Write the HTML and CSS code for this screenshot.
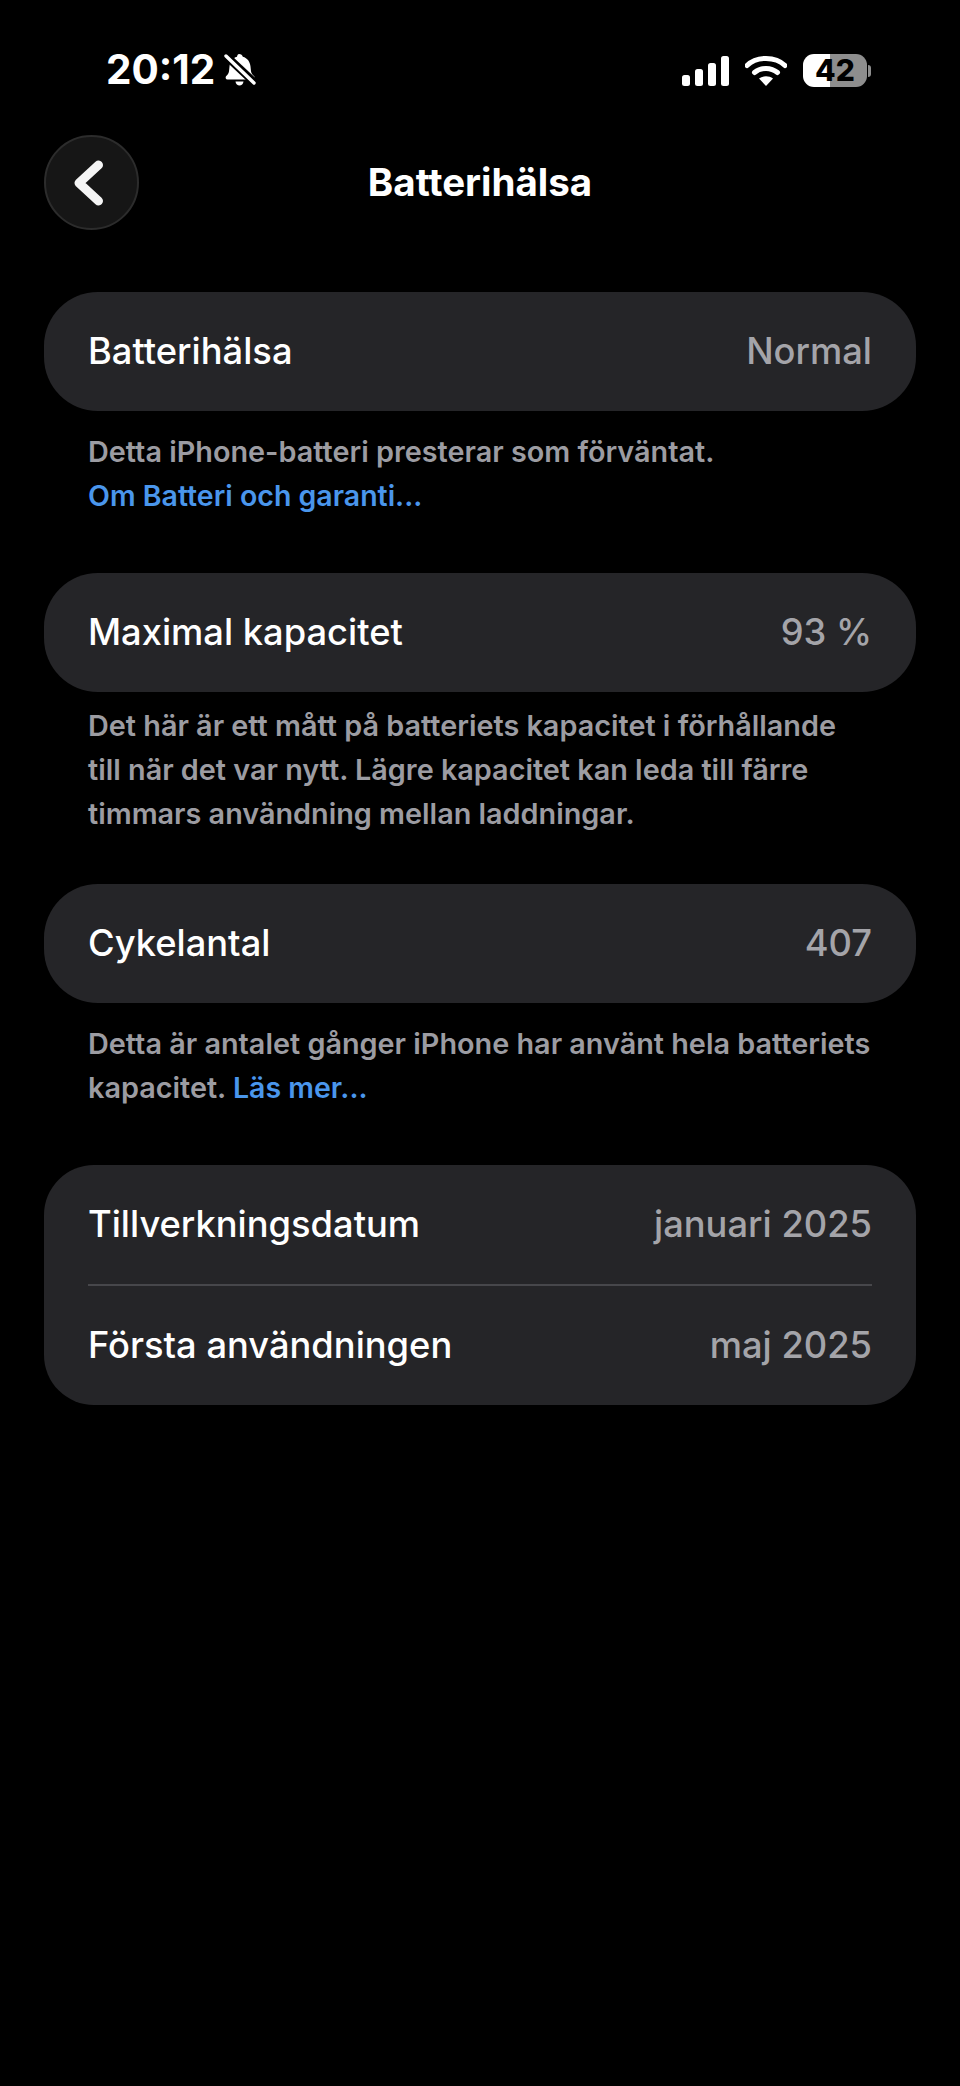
FILE: index.html
```html
<!DOCTYPE html>
<html lang="sv">
<head>
  <meta charset="UTF-8">
  <title>Batterihälsa</title>
  <link rel="stylesheet" href="styles.css">
</head>
<body>

  <div class="statusbar">
    <div class="status-left">
      <span class="clock">20:12</span>
      <svg class="bell" width="34" height="36" viewBox="0 0 34 36">
        <path d="M16 2c2 0 3.500 1.200 3.800 2.800 4.700 1.300 7.200 5 7.700 9.700l.5 4.700c.2 1.800 1.300 3.300 3 4.800 1.200 1.300.5 3.500-1.300 3.500H4.500c-1.800 0-2.500-2.200-1.300-3.500 1.700-1.500 2.600-3 2.800-4.800l.5-4.700c.5-4.700 2.800-8.400 7.500-9.700C14.200 3.200 15 2 16 2z" fill="#fff"/>
        <path d="M12.500 29.500h8c-.3 2.500-2 4-4 4s-3.700-1.500-4-4z" fill="#fff"/>
        <path d="M2 3l30 28" stroke="#000" stroke-width="8"/>
        <path d="M3 4l28 27" stroke="#fff" stroke-width="3.400" stroke-linecap="round"/>
      </svg>
    </div>
    <div class="status-right">
      <svg width="47" height="30" viewBox="0 0 47 30">
        <rect x="0" y="19" width="8" height="11" rx="2.500" fill="#fff"/>
        <rect x="13" y="13" width="8" height="17" rx="2.500" fill="#fff"/>
        <rect x="26" y="7" width="8" height="23" rx="2.500" fill="#fff"/>
        <rect x="39" y="0" width="8" height="30" rx="2.500" fill="#fff"/>
      </svg>
      <svg width="42" height="31" viewBox="0 0 42 31">
        <path d="M2 10.500C11.500 1 30.500 1 40 10.500" fill="none" stroke="#fff" stroke-width="5" stroke-linecap="round"/>
        <path d="M9.500 17.500c6.500-5.500 16.500-5.500 23 0" fill="none" stroke="#fff" stroke-width="5" stroke-linecap="round"/>
        <path d="M21 31l-7-7.500c4-3 10-3 14 0z" fill="#fff"/>
      </svg>
      <div class="battery">
        <div class="battery-body">42</div>
        <div class="battery-cap"></div>
      </div>
    </div>
  </div>

  <header class="topnav">
    <button class="back">
      <svg width="34" height="48" viewBox="0 0 34 48">
        <path d="M26.500 6L7 24l19.500 18" fill="none" stroke="#f5f5f5" stroke-width="9" stroke-linecap="round" stroke-linejoin="round"/>
      </svg>
    </button>
    <h1>Batterihälsa</h1>
  </header>

  <main class="content">
    <section class="card">
      <div class="row"><span>Batterihälsa</span><span class="value">Normal</span></div>
    </section>
    <p class="note">Detta iPhone-batteri presterar som förväntat.<br><a href="#">Om Batteri och garanti...</a></p>

    <section class="card">
      <div class="row"><span>Maximal kapacitet</span><span class="value">93 %</span></div>
    </section>
    <p class="note note-tight">Det här är ett mått på batteriets kapacitet i förhållande till när det var nytt. Lägre kapacitet kan leda till färre timmars användning mellan laddningar.</p>

    <section class="card">
      <div class="row"><span>Cykelantal</span><span class="value">407</span></div>
    </section>
    <p class="note">Detta är antalet gånger iPhone har använt hela batteriets<br>kapacitet. <a href="#">Läs mer...</a></p>

    <section class="card card-list">
      <div class="row"><span>Tillverkningsdatum</span><span class="value">januari 2025</span></div>
      <div class="divider"></div>
      <div class="row"><span>Första användningen</span><span class="value">maj 2025</span></div>
    </section>
  </main>

</body>
</html>
```

FILE: styles.css
```css
body {
  margin: 0;
  background: #000;
  color: #fff;
  font-family: Inter, "Noto Sans", sans-serif;
}

.statusbar {
  height: 135px;
  box-sizing: border-box;
  padding: 50px 89px 0 106px;
  display: flex;
  justify-content: space-between;
  align-items: flex-start;
}

.status-left {
  display: flex;
  align-items: center;
  gap: 8px;
}

.clock {
  font-size: 40.500px;
  font-weight: 700;
  line-height: 40px;
}

.status-right {
  display: flex;
  align-items: center;
  gap: 16px;
  padding-top: 4px;
}

.battery {
  display: flex;
  align-items: center;
  gap: 1px;
}

.battery-body {
  width: 64px;
  height: 33px;
  border-radius: 11px;
  background: linear-gradient(to right, #fff 27px, #8e8e8e 27px);
  text-align: center;
  font-size: 30px;
  font-weight: 800;
  line-height: 33px;
  color: #000;
}

.battery-cap {
  width: 3px;
  height: 12px;
  border-radius: 0 4px 4px 0;
  background: #8e8e8e;
}

.topnav {
  height: 95px;
  padding: 0 44px;
  display: flex;
  align-items: center;
}

.topnav h1 {
  flex: 1;
  margin: 0 95px 0 0;
  padding-bottom: 2px;
  text-align: center;
  font-size: 38.500px;
  font-weight: 700;
}

.back {
  width: 95px;
  height: 95px;
  padding: 0 6px 0 0;
  box-sizing: border-box;
  border-radius: 50%;
  border: 2px solid #2c2c2c;
  background: #161616;
  display: flex;
  align-items: center;
  justify-content: center;
}

.content {
  padding: 62px 44px 0;
}

.card {
  background: #252528;
  border-radius: 54px;
  padding: 0 44px;
}

.card-list {
  border-radius: 50px;
}

.row {
  height: 119px;
  box-sizing: border-box;
  padding-bottom: 2px;
  display: flex;
  align-items: center;
  justify-content: space-between;
  font-size: 36.300px;
  font-weight: 500;
}

.value {
  color: #a4a4a9;
}

.divider {
  height: 2px;
  background: #47474b;
}

.note {
  margin: 19px 44px 55px;
  font-size: 28.800px;
  font-weight: 600;
  line-height: 44px;
  color: #9c9ca2;
}

.note-tight {
  margin-top: 12px;
  margin-bottom: 48px;
}

.note a {
  font-size: 28.500px;
  color: #4a96ec;
  text-decoration: none;
}
```
